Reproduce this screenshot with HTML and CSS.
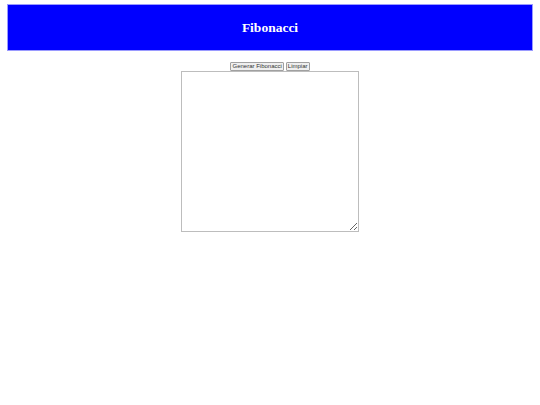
FILE: index.html
```
<!DOCTYPE html>
<html>
<head>
<meta charset="utf-8">
<link rel="stylesheet" href="styles.css">
</head>
<body>
<header class="banner"><h1 class="title">Fibonacci</h1></header>
<main class="content">
  <div class="controls">
    <button class="btn">Generar Fibonacci</button>
    <button class="btn">Limpiar</button>
  </div>
  <textarea class="output"></textarea>
</main>
</body>
</html>
```
FILE: styles.css
```
html, body { margin: 0; padding: 0; background: #fff; }
body { padding: 4px 7px 0 7px; font-family: "Liberation Sans", Arial, sans-serif; }
.banner {
  background: #0000ff;
  border: 1px solid #9a9aff;
  height: 47px;
  box-sizing: border-box;
  display: flex;
  align-items: center;
  justify-content: center;
}
.title {
  margin: 0;
  color: #fff;
  font-family: "Liberation Serif", "Times New Roman", serif;
  font-weight: bold;
  font-size: 13.5px;
}
.content { display: flex; flex-direction: column; align-items: center; margin-top: 11px; }
.controls { display: flex; gap: 2px; height: 9px; }
.btn {
  font-family: "Liberation Sans", Arial, sans-serif;
  font-size: 6px;
  height: 9px;
  line-height: 7px;
  padding: 0 1px;
  border: 1px solid #a0a0a0;
  border-radius: 1px;
  background: #efefef;
  color: #333;
}
.output {
  width: 178px;
  height: 161px;
  box-sizing: border-box;
  border: 1px solid #bdbdbd;
  margin: 0;
  padding: 0;
  resize: both;
}
```
